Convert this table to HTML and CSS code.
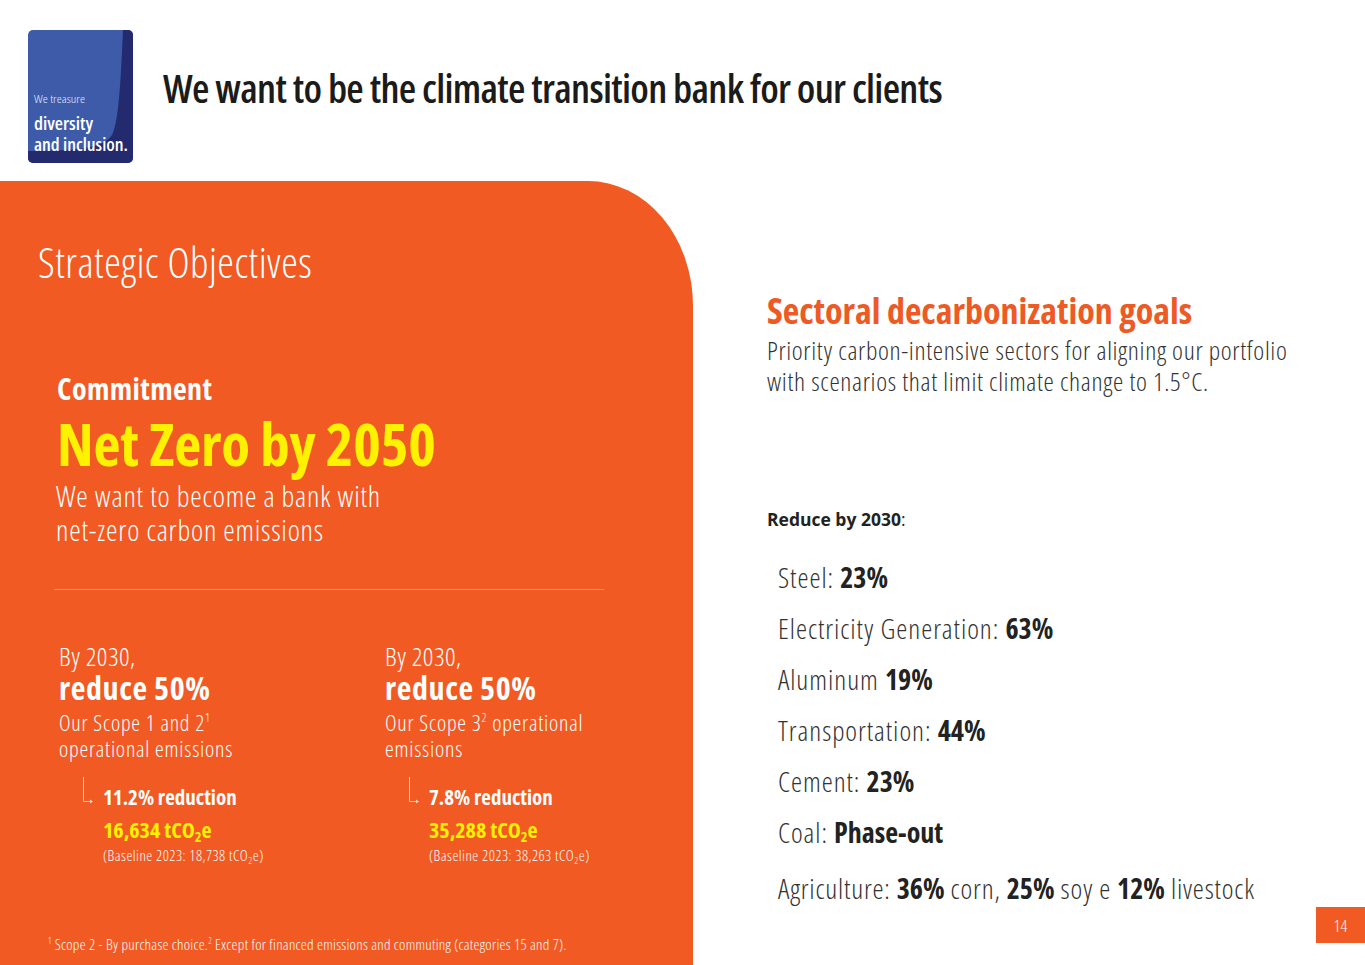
FILE: index.html
```html
<!DOCTYPE html>
<html lang="en">
<head>
<meta charset="utf-8">
<title>Climate transition bank</title>
<link rel="stylesheet" href="styles.css">
</head>
<body>
<div class="page">
  <header class="top">
    <div class="logo">
      <svg width="105" height="133" viewBox="0 0 105 133" xmlns="http://www.w3.org/2000/svg">
        <defs>
          <clipPath id="lg"><rect width="105" height="133" rx="5"/></clipPath>
        </defs>
        <g clip-path="url(#lg)">
          <rect width="105" height="133" fill="#3d5ba9"/>
          <path d="M95 0 H105 V133 H0 V121 C48 121 76 118 84 105 C91 92 93 45 95 0 Z" fill="#232a6e"/>
        </g>
        <text x="6" y="73" class="lg-small" textLength="51" lengthAdjust="spacingAndGlyphs">We treasure</text>
        <text x="6" y="100" class="lg-big" textLength="59" lengthAdjust="spacingAndGlyphs">diversity</text>
        <text x="6" y="121" class="lg-big" textLength="94" lengthAdjust="spacingAndGlyphs">and inclusion.</text>
      </svg>
    </div>
    <h1 class="title">We want to be the climate transition bank for our clients</h1>
  </header>

  <main class="main">
    <section class="panel">
      <h2 class="so">Strategic Objectives</h2>
      <div class="commit">
        <div class="commit-label">Commitment</div>
        <div class="netzero">Net Zero by 2050</div>
        <div class="commit-desc">We want to become a bank with<br>net-zero carbon emissions</div>
      </div>
      <hr class="divider">
      <div class="cols">
        <div class="col col1">
          <div class="by">By 2030,</div>
          <div class="reduce">reduce 50%</div>
          <div class="scope">Our Scope 1 and 2<sup>1</sup><br>operational emissions</div>
          <div class="result">
            <svg class="arrow" width="21" height="26" viewBox="0 0 21 26" xmlns="http://www.w3.org/2000/svg">
              <path d="M1.5 0 V24.5 H8" fill="none" stroke="#fbd0bd" stroke-width="1"/>
              <path d="M8 22.5 L11 24.5 L8 26.5 Z" fill="#fbd0bd"/>
            </svg>
            <div class="res-text">
              <div class="res-title">11.2% reduction</div>
              <div class="res-val">16,634 tCO<sub>2</sub>e</div>
              <div class="res-base">(Baseline 2023: 18,738 tCO<sub>2</sub>e)</div>
            </div>
          </div>
        </div>
        <div class="col col2">
          <div class="by">By 2030,</div>
          <div class="reduce">reduce 50%</div>
          <div class="scope">Our Scope 3<sup>2</sup> operational<br>emissions</div>
          <div class="result">
            <svg class="arrow" width="21" height="26" viewBox="0 0 21 26" xmlns="http://www.w3.org/2000/svg">
              <path d="M1.5 0 V24.5 H8" fill="none" stroke="#fbd0bd" stroke-width="1"/>
              <path d="M8 22.5 L11 24.5 L8 26.5 Z" fill="#fbd0bd"/>
            </svg>
            <div class="res-text">
              <div class="res-title">7.8% reduction</div>
              <div class="res-val">35,288 tCO<sub>2</sub>e</div>
              <div class="res-base">(Baseline 2023: 38,263 tCO<sub>2</sub>e)</div>
            </div>
          </div>
        </div>
      </div>
      <p class="foot"><sup>1</sup> Scope 2 - By purchase choice.<sup>2</sup> Except for financed emissions and commuting (categories 15 and 7).</p>
    </section>

    <section class="right">
      <h2 class="sect-title">Sectoral decarbonization goals</h2>
      <p class="sect-desc">Priority carbon-intensive sectors for aligning our portfolio<br>with scenarios that limit climate change to 1.5°C.</p>
      <p class="reduce-by"><b>Reduce by 2030</b>:</p>
      <ul class="goals">
        <li>Steel: <b>23%</b></li>
        <li>Electricity Generation: <b>63%</b></li>
        <li>Aluminum <b>19%</b></li>
        <li>Transportation: <b>44%</b></li>
        <li>Cement: <b>23%</b></li>
        <li>Coal: <b>Phase-out</b></li>
        <li class="last">Agriculture: <b>36%</b> corn, <b>25%</b> soy e <b>12%</b> livestock</li>
      </ul>
    </section>
  </main>
  <div class="pagenum">14</div>
</div>
</body>
</html>
```

FILE: styles.css
```css
html, body {
  margin: 0;
  padding: 0;
  background: #ffffff;
}
body {
  font-family: "Open Sans", "Noto Sans", "Liberation Sans", sans-serif;
  font-stretch: 75%;
}
.page {
  position: relative;
  width: 1365px;
  height: 965px;
  overflow: hidden;
  display: flex;
  flex-direction: column;
}
.top {
  height: 181px;
  flex: none;
  display: flex;
  align-items: flex-start;
}
.logo {
  margin: 30px 0 0 28px;
  width: 105px;
  height: 133px;
  flex: none;
}
.logo svg { display: block; }
.lg-small {
  font-family: "Open Sans", "Noto Sans", sans-serif;
  font-stretch: 75%;
  font-size: 11px;
  font-weight: 300;
  fill: #e3e9f6;
}
.lg-big {
  font-family: "Open Sans", "Noto Sans", sans-serif;
  font-stretch: 75%;
  font-size: 18px;
  font-weight: 600;
  fill: #ffffff;
}
.title {
  margin: 65px 0 0 30px;
  font-size: 40px;
  line-height: 46px;
  font-weight: 600;
  letter-spacing: -0.7px;
  color: #1b1b1b;
  white-space: nowrap;
}

.main {
  flex: 1;
  display: flex;
  min-height: 0;
}
.panel {
  width: 693px;
  flex: none;
  background: #f15a22;
  border-top-right-radius: 105px 125px;
  color: #ffffff;
  display: flex;
  flex-direction: column;
}
.so {
  margin: 57px 0 0 38px;
  font-size: 42px;
  line-height: 48px;
  font-weight: 300;
  letter-spacing: 0.5px;
}
.commit {
  margin: 86px 0 0 57px;
}
.commit-label {
  font-size: 30px;
  line-height: 34px;
  font-weight: 700;
  letter-spacing: 0.4px;
}
.netzero {
  margin-top: 8px;
  font-size: 59px;
  line-height: 58px;
  font-weight: 700;
  letter-spacing: -0.2px;
  color: #fff200;
}
.commit-desc {
  margin: 7px 0 0 -1px;
  font-size: 29px;
  line-height: 34px;
  font-weight: 300;
  letter-spacing: 0.8px;
}
.divider {
  margin: 42px 0 0 54px;
  width: 550px;
  height: 1px;
  border: 0;
  background: #f6946d;
}
.cols {
  margin-top: 51px;
  display: flex;
}
.col1 {
  margin-left: 59px;
  width: 326px;
}
.col2 {
  width: 300px;
}
.by {
  font-size: 26px;
  line-height: 30px;
  font-weight: 300;
  letter-spacing: 0.5px;
}
.reduce {
  font-size: 32px;
  line-height: 34px;
  font-weight: 700;
  letter-spacing: 0.6px;
}
.scope {
  margin-top: 4px;
  font-size: 22px;
  line-height: 26px;
  font-weight: 300;
  letter-spacing: 0.8px;
}
sup {
  font-size: 0.55em;
  line-height: 0;
  vertical-align: 0.75em;
}
sub {
  font-size: 0.65em;
  line-height: 0;
  vertical-align: -0.3em;
}
.result {
  margin-top: 22px;
  display: flex;
  align-items: flex-start;
}
.arrow {
  flex: none;
  margin: -6px 0 0 23px;
  overflow: visible;
}
.res-title {
  font-size: 21px;
  line-height: 28px;
  font-weight: 700;
}
.res-val {
  margin-top: 3px;
  font-size: 22px;
  line-height: 30px;
  font-weight: 700;
  color: #fff200;
}
.res-base {
  margin-top: 1px;
  font-size: 15px;
  line-height: 20px;
  font-weight: 300;
  letter-spacing: 0.5px;
}
.foot {
  margin: auto 0 11px 48px;
  font-size: 15px;
  line-height: 20px;
  font-weight: 300;
  letter-spacing: 0.3px;
}

.right {
  flex: 1;
  padding-left: 74px;
  display: flex;
  flex-direction: column;
}
.sect-title {
  margin: 110px 0 0 0;
  font-size: 36px;
  line-height: 40px;
  font-weight: 700;
  color: #ee5a24;
}
.sect-desc {
  margin: 4px 0 0 0;
  font-size: 26px;
  line-height: 31px;
  font-weight: 300;
  letter-spacing: 0.65px;
  color: #333333;
}
.reduce-by {
  margin: 110px 0 0 0;
  font-size: 17.5px;
  line-height: 24px;
  font-stretch: 100%;
  color: #222222;
}
.reduce-by b { font-weight: 700; }
.goals {
  margin: 21px 0 0 11px;
  padding: 0;
  list-style: none;
}
.goals li {
  font-size: 28px;
  line-height: 51px;
  font-weight: 300;
  letter-spacing: 0.95px;
  color: #333333;
  white-space: nowrap;
}
.goals li b {
  font-weight: 700;
  letter-spacing: 0;
  color: #222222;
}
.goals li.last {
  margin-top: 5px;
  letter-spacing: 0.8px;
}
.pagenum {
  position: absolute;
  right: 0;
  bottom: 22px;
  width: 49px;
  height: 36px;
  background: #f15a22;
  color: #ffffff;
  font-size: 17px;
  font-weight: 300;
  display: flex;
  align-items: center;
  justify-content: center;
}
```
